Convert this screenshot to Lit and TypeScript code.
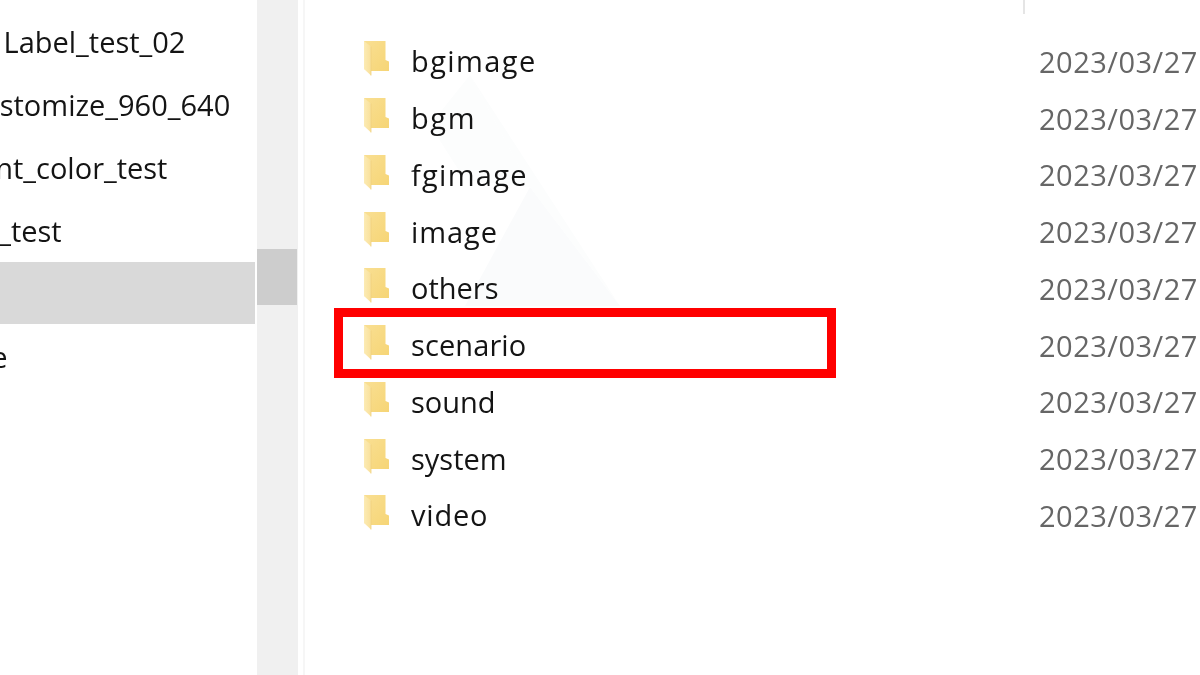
import { LitElement, html, css, svg } from "lit";
import { customElement } from "lit/decorators.js";

const side = [
  { t: "Label_test_02", o: 3.5 },
  { t: "customize_960_640", o: -32 },
  { t: "font_color_test", o: -32 },
  { t: "tag_test", o: -44 },
  { t: "", o: 0, sel: true },
  { t: "one", o: -44 },
];
const folders = [
  { n: "bgimage", s: 1.4 },
  { n: "bgm", s: 1.6 },
  { n: "fgimage", s: 1.3 },
  { n: "image", s: 0.9 },
  { n: "others", s: 0 },
  { n: "scenario", s: 0.1 },
  { n: "sound", s: 0 },
  { n: "system", s: 0 },
  { n: "video", s: 0.8 },
];

const folderIcon = svg`<svg class="ico" viewBox="0 0 27 36" aria-hidden="true">
  <defs>
    <linearGradient id="fb" x1="0" y1="0" x2="1" y2="1"><stop offset="0" stop-color="#f9df92"/><stop offset="1" stop-color="#f6d576"/></linearGradient>
    <linearGradient id="ff" x1="0" y1="0" x2="1" y2="0"><stop offset="0" stop-color="#fcebb4"/><stop offset="1" stop-color="#f9e09a"/></linearGradient>
  </defs>
  <path d="M1 1H22.5V20L26 21.5V31H8L1 29Z" fill="url(#fb)"/>
  <path d="M1 1L8 6.5V35.5L1 29Z" fill="url(#ff)"/>
  <path d="M8 6.5V35.5" stroke="#f0d07e" stroke-width="0.8" fill="none"/>
</svg>`;

@customElement("app-root")
export class AppRoot extends LitElement {
  static styles = css`
    :host { display: block; width: 1200px; height: 675px; overflow: hidden; background: #fff;
      font-family: "Open Sans", "Noto Sans", sans-serif; color: #141414; }
    .win { display: flex; height: 675px; }
    .side { width: 257px; flex: none; padding-top: 10px; box-sizing: border-box; overflow: hidden; }
    .srow { height: 63px; width: 255px; display: flex; align-items: center; font-size: 29px; white-space: nowrap; overflow: hidden; filter: blur(0.3px); }
    .srow.sel { background: #d9d9d9; filter: none; height: 62px; margin-bottom: 1px; }
    .srow span { display: block; flex: none; }
    .bar { width: 41px; flex: none; background: #f0f0f0; display: flex; flex-direction: column; padding-top: 249px; box-sizing: border-box; }
    .thumb { height: 56px; width: 40px; background: #cdcdcd; }
    .gap { width: 7px; flex: none; border-right: 2px solid #f6f6f6; box-sizing: border-box; }
    .main { flex: 1; position: relative; padding: 32.4px 0 0 58px; overflow: hidden; }
    .wm { position: absolute; left: 0; top: 0; width: 895px; height: 675px; }
    .sep { position: absolute; left: 718px; top: 0; width: 2px; height: 14px; background: #e5e5e5; }
    .row { position: relative; height: 56.75px; display: flex; align-items: center; font-size: 29px; filter: blur(0.3px); }
    .ico { width: 27px; height: 36px; flex: none; margin-top: -5px; }
    .name { margin-left: 21px; width: 628px; flex: none; }
    .date { color: #666; white-space: nowrap; letter-spacing: 0.5px; margin-top: 1.4px; }
    .mark { position: absolute; left: 29px; top: 308px; width: 502px; height: 70px; box-sizing: border-box; border: 9px solid #ff0000; }
  `;

  render() {
    return html`<div class="win">
      <div class="side">
        ${side.map(
          (r) => html`<div class="srow ${r.sel ? "sel" : ""}"><span style="margin-left:${r.o}px">${r.t}</span></div>`
        )}
      </div>
      <div class="bar"><div class="thumb"></div></div>
      <div class="gap"></div>
      <div class="main">
        <svg class="wm" viewBox="0 0 895 675" aria-hidden="true">
          <polygon points="165,75 225,187 160,180 125,125" fill="#fcfdfd"/>
          <polygon points="225,187 315,306 160,306" fill="#fafbfc"/>
          <polygon points="165,75 315,306 225,187" fill="#fcfdfd"/>
        </svg>
        <div class="sep"></div>
        ${folders.map(
          (f) => html`<div class="row">${folderIcon}<span class="name" style="letter-spacing:${f.s}px">${f.n}</span><span class="date">2023/03/27</span></div>`
        )}
        <div class="mark"></div>
      </div>
    </div>`;
  }
}
